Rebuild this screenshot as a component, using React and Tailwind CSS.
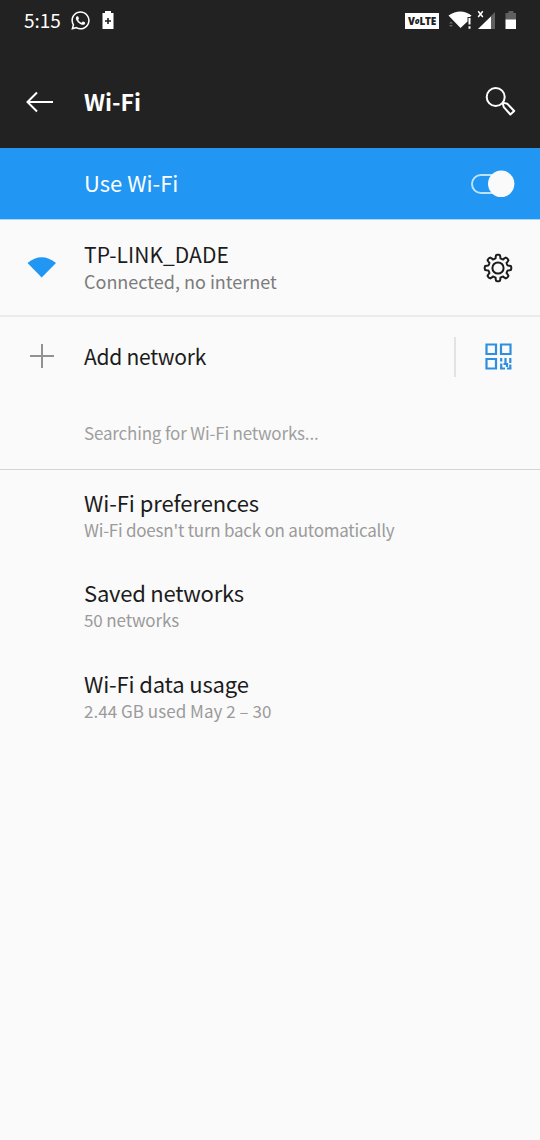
import React from "react";
import { FaWhatsapp } from "react-icons/fa";

const gearPoints = [];
for (let i = 0; i < 8; i++) {
  const base = i * 45;
  [[-18, 9.8], [-14, 10], [-11.5, 11.6], [-8.5, 13], [-3, 13.3], [3, 13.3], [8.5, 13], [11.5, 11.6], [14, 10], [18, 9.8]].forEach(([offset, r]) => {
    const a = ((base + offset - 90) * Math.PI) / 180;
    gearPoints.push(`${(15 + r * Math.cos(a)).toFixed(2)},${(15 + r * Math.sin(a)).toFixed(2)}`);
  });
}

function StatusBar() {
  return (
    <div className="flex h-10 items-center pr-[23px] pl-6 text-white">
      <span className="w-[38px] whitespace-nowrap pb-px text-[19px] leading-[39px]">5:15</span>
      <FaWhatsapp className="ml-[8px] size-[21px]" />
      <svg className="ml-[11px]" width="12" height="20" viewBox="0 0 12 20">
        <path d="M3 1h6v2h2.500v16H.5V3H3z" fill="#fff" />
        <path d="M6 8v6M3 11h6" stroke="#222" strokeWidth="1.600" />
      </svg>
      <span className="mt-px ml-auto flex h-[16px] w-[34px] items-center justify-center bg-white font-['Open_Sans',sans-serif] text-[10px] leading-none font-extrabold tracking-[-0.2px] text-[#222]">
        V<span className="text-[8px] italic">o</span>LTE
      </span>
      <svg className="ml-[9px]" width="25" height="22" viewBox="0 0 25 22">
        <path d="M.5 6.500Q12.500 -1.500 23.500 6.500L22 8H19.500V12.500L12.500 19z" fill="#fff" />
        <path d="M21.500 9v6.500M21.500 17.300v2.400" stroke="#fff" strokeWidth="2" />
        <path d="M1 14.500h4l-2-2zM1 16h4l-2 2z" fill="#666" />
      </svg>
      <svg className="ml-[4px]" width="19" height="20" viewBox="0 0 19 20">
        <path d="M18 2v17H1z" fill="#606060" />
        <path d="M14 6.500V19H1z" fill="#fff" />
        <path d="M1.200 1.300l4.600 5.700M5.800 1.300l-4.600 5.700" stroke="#fff" strokeWidth="1.500" />
      </svg>
      <svg className="ml-[9px]" width="12" height="20" viewBox="0 0 12 20">
        <path d="M3.500 1h5v2H11v7H.5V3h3z" fill="#606060" />
        <path d="M.5 9.500H11V19H.5z" fill="#fff" />
      </svg>
    </div>
  );
}

function Item({ title, detail, titleClass, detailClass }) {
  return (
    <div className="flex h-[90.500px] flex-col pt-[16.500px] pl-[84px] whitespace-nowrap">
      <div className={`text-[22px] leading-[31px] text-[#1c1c1c] ${titleClass}`}>{title}</div>
      <div className={`text-[17px] leading-[23px] text-[#9b9b9b] ${detailClass}`}>{detail}</div>
    </div>
  );
}

export default function App() {
  return (
    <div className="h-[1140px] w-[540px] overflow-hidden bg-[#fafafa] font-['Noto_Sans_CJK_SC',sans-serif]">
      <header className="h-[148px] bg-[#222222] text-white">
        <StatusBar />
        <div className="flex h-[124px] items-center">
          <svg className="ml-[26px]" width="28" height="22" viewBox="0 0 28 22" fill="none" stroke="#fff" strokeWidth="2">
            <path d="M1.500 11H27M11 1.500L1.500 11l9.500 9.500" />
          </svg>
          <h1 className="ml-[30px] pb-[3px] text-[23px] leading-[30px] font-bold">Wi-Fi</h1>
          <svg className="mr-[24px] ml-auto" width="32" height="32" viewBox="0 0 32 32" fill="none" stroke="#fff" strokeWidth="2">
            <circle cx="11.700" cy="11" r="9" />
            <path d="M18.800 17.500l1 3.700 6.600 7.300 3.800-3.500-6.900-7.200-3.700-.9z" strokeLinejoin="round" />
          </svg>
        </div>
      </header>

      <section className="flex h-[72px] items-center border-b border-[#a9d7f9] bg-[#2196f3] pl-[84px] text-white">
        <span className="pb-[3px] text-[22px] leading-[30px]">Use Wi-Fi</span>
        <svg className="mr-[25px] ml-auto" width="45" height="28" viewBox="0 0 45 28">
          <rect x="2" y="5" width="36" height="18" rx="9" fill="none" stroke="#bce2fc" strokeWidth="2" />
          <circle cx="31.200" cy="13.800" r="13.200" fill="#fafafa" />
        </svg>
      </section>

      <section className="flex h-[97px] items-center border-b-2 border-[#ebebeb]">
        <svg className="ml-[27px]" width="30" height="22" viewBox="0 0 30 22">
          <path d="M.5 6Q14.500 -5.500 29 6L14.700 20.500z" fill="#2196f3" />
        </svg>
        <div className="ml-[27px] whitespace-nowrap">
          <div className="text-[21px] leading-[27px] tracking-[0.05px] text-[#1c1c1c]">TP-LINK_DADE</div>
          <div className="text-[18px] leading-[26px] text-[#7c7c7c]">Connected, no internet</div>
        </div>
        <svg className="mr-[27px] ml-auto" width="30" height="30" viewBox="0 0 30 30" fill="none" stroke="#1c1c1c" strokeWidth="2" strokeLinejoin="round">
          <polygon points={gearPoints.join(" ")} />
          <circle cx="15" cy="15" r="5.600" />
        </svg>
      </section>

      <section className="flex h-[79px] items-center">
        <svg className="mb-px ml-[29px]" width="26" height="26" viewBox="0 0 26 26" stroke="#929292" strokeWidth="2">
          <path d="M13 1v24M1 13h24" />
        </svg>
        <span className="ml-[29px] pb-[2px] text-[21px] leading-[30px] tracking-[-0.260px] text-[#1c1c1c]">Add network</span>
        <span className="ml-auto h-10 w-[2px] bg-[#e3e3e3]" />
        <svg className="mr-[28px] ml-[29px]" width="27" height="27" viewBox="0 0 27 27" fill="none" stroke="#2f8fde" strokeWidth="2.200">
          <path d="M1.500 1.500h9.500v9.500H1.500zM16 1.500h9.500v9.500H16zM1.500 16h9.500v9.500H1.500z" />
          <path d="M16.200 15v3.500M16.200 20.500v6M15 25.500h5M20.500 15v7M22 20v4M25.300 15v5M18.500 21h3M25.300 21.500v5M22 25.500h4.500" />
        </svg>
      </section>

      <section className="h-[74px] border-b border-[#d4d4d4] pt-[24px] pl-[84px] text-[17px] leading-[26px] tracking-[-0.180px] whitespace-nowrap text-[#9f9f9f]">
        Searching for Wi-Fi networks...
      </section>

      <section>
        <Item title="Wi-Fi preferences" detail="Wi-Fi doesn't turn back on automatically" titleClass="tracking-[-0.080px]" detailClass="tracking-[-0.230px]" />
        <Item title="Saved networks" detail="50 networks" titleClass="tracking-[-0.230px]" detailClass="tracking-[-0.130px]" />
        <Item title="Wi-Fi data usage" detail="2.44 GB used May 2 – 30" titleClass="tracking-[-0.150px]" detailClass="tracking-[0.040px]" />
      </section>
    </div>
  );
}
